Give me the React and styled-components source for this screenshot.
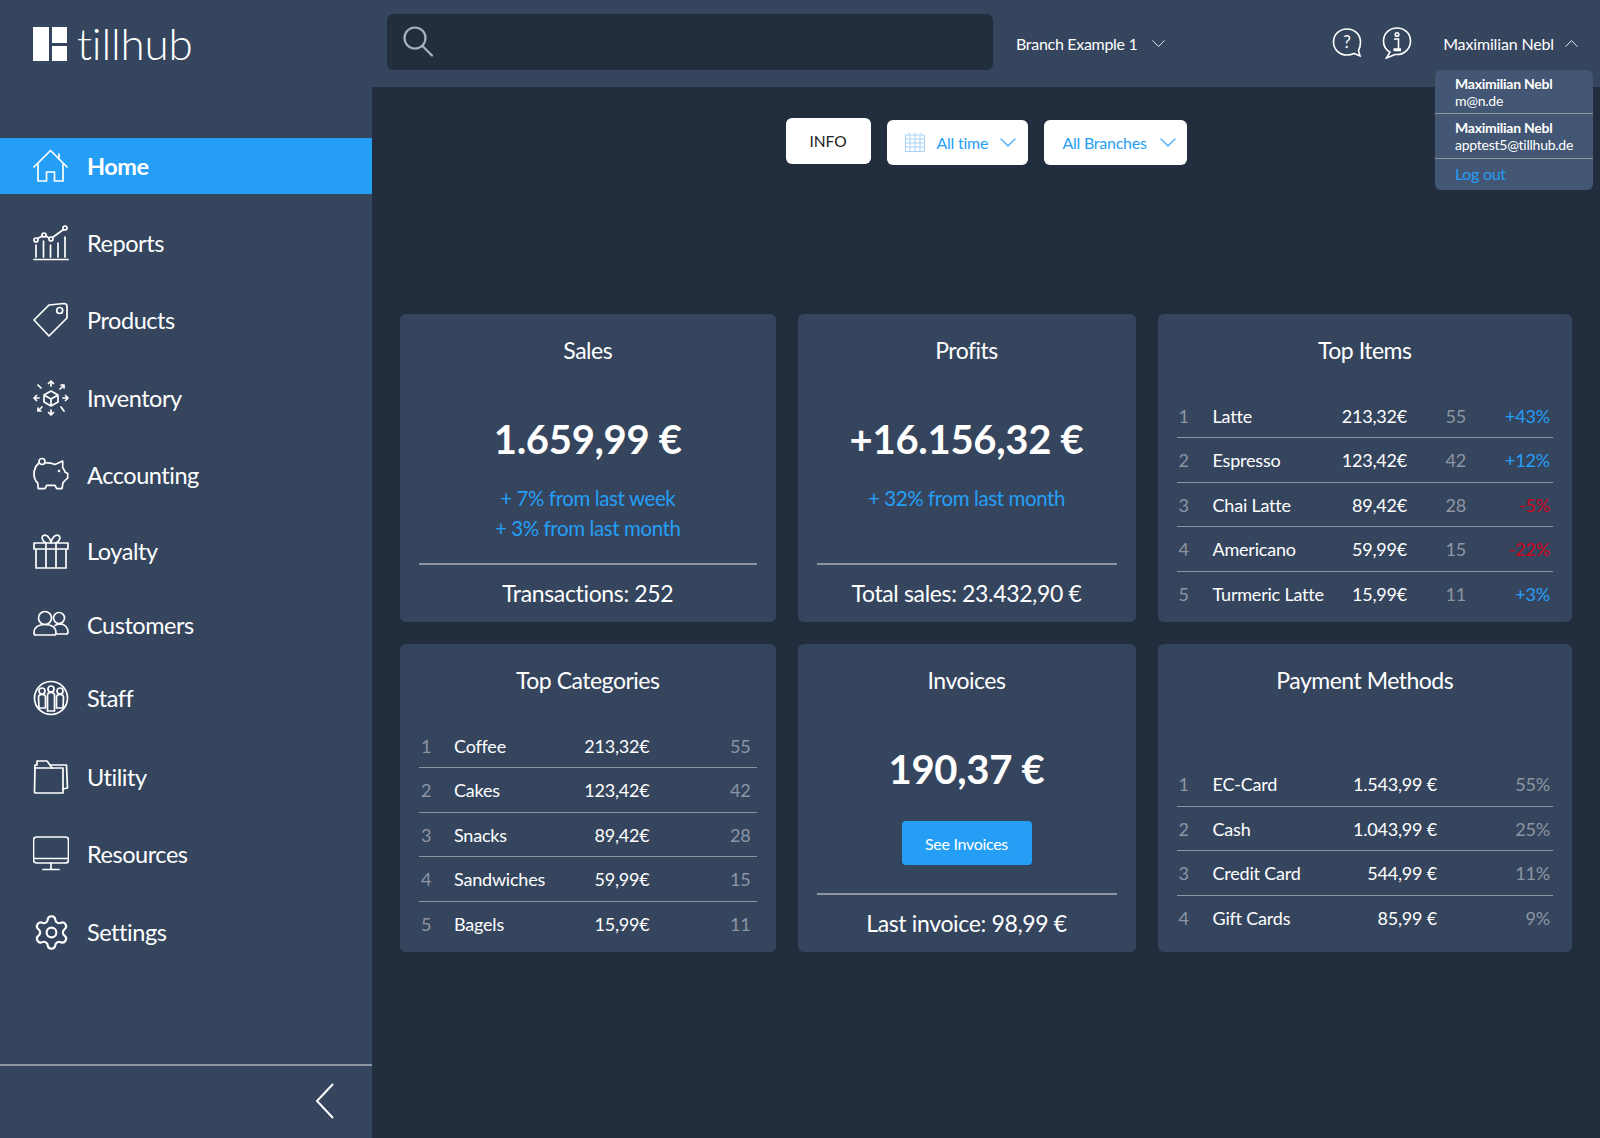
import React from 'react'
import styled, { createGlobalStyle } from 'styled-components'
import { Settings as SettingsCog } from 'lucide-react'

const navy = '#35455e'
const dark = '#222e3e'
const blue = '#259ff6'
const rule = '#8d95a2'

const Global = createGlobalStyle`
  html, body { margin: 0; padding: 0; background: ${dark}; }
  body { font-family: Lato, "Open Sans", sans-serif; color: #fff; }
  * { box-sizing: border-box; }
`

const Page = styled.div`
  width: 1600px;
  height: 1138px;
  display: flex;
  flex-direction: column;
  overflow: hidden;
  background: ${dark};
`

const Header = styled.header`
  height: 87px;
  flex: none;
  display: flex;
  align-items: flex-start;
  background: ${navy};
`

const LogoArea = styled.div`
  width: 387px;
  flex: none;
  display: flex;
  align-items: flex-start;
  padding: 27px 0 0 33px;
`

const LogoMark = styled.div`
  width: 34px;
  height: 34px;
  display: grid;
  grid-template-columns: 16px 15px;
  grid-template-rows: 15.5px 15.5px;
  gap: 3px;
  & > span { background: #fff; }
  & > span:first-child { grid-row: 1 / 3; }
`

const LogoText = styled.span`
  margin: -10px 0 0 10px;
  font-size: 44px;
  line-height: 52px;
  font-weight: 300;
  letter-spacing: -0.2px;
`

const SearchBox = styled.div`
  width: 606px;
  height: 56px;
  margin-top: 14px;
  display: flex;
  align-items: center;
  padding-left: 15px;
  border-radius: 6px;
  background: ${dark};
`

const BranchPicker = styled.div`
  margin: 34px 0 0 23px;
  display: flex;
  align-items: center;
  gap: 14px;
  font-size: 16px;
  line-height: 20px;
  letter-spacing: -0.3px;
`

const HeaderRight = styled.div`
  margin: 27px 0 0 auto;
  padding-right: 22px;
  display: flex;
  align-items: flex-start;
`

const Bubble = styled.svg`
  width: 30px;
  height: 32px;
  margin-right: ${p => p.$gap}px;
  fill: none;
  stroke: #fff;
  stroke-width: 1.6;
`

const UserName = styled.div`
  margin-top: 7px;
  display: flex;
  align-items: center;
  gap: 11px;
  font-size: 16px;
  line-height: 20px;
  letter-spacing: -0.15px;
`

const AccountMenu = styled.div`
  position: absolute;
  left: 1435px;
  top: 70px;
  width: 158px;
  height: 120px;
  border-radius: 6px;
  background: #435673;
  font-size: 14px;
  line-height: 17px;
  letter-spacing: -0.25px;
`

const AccountRow = styled.div`
  height: ${p => p.$h}px;
  padding: ${p => p.$top}px 0 0 20px;
  border-bottom: 1px solid ${rule};
  & > strong { display: block; font-weight: 700; }
`

const LogOut = styled.div`
  padding: 5px 0 0 20px;
  font-size: 16px;
  line-height: 20px;
  letter-spacing: -0.3px;
  color: ${blue};
`

const Body = styled.div`
  flex: 1;
  display: flex;
  min-height: 0;
`

const Sidebar = styled.aside`
  width: 372px;
  flex: none;
  display: flex;
  flex-direction: column;
  background: ${navy};
`

const Nav = styled.nav`
  flex: 1;
  padding-top: 51px;
`

const NavItem = styled.div`
  height: 56px;
  margin-top: ${p => p.$gap}px;
  display: flex;
  align-items: center;
  padding-left: 33px;
  font-size: 23.5px;
  line-height: 30px;
  letter-spacing: -0.45px;
  font-weight: ${p => (p.$active ? 700 : 400)};
  background: ${p => (p.$active ? blue : 'transparent')};
`

const NavIcon = styled.svg`
  width: 36px;
  height: 36px;
  flex: none;
  margin-right: 18px;
  fill: none;
  stroke: #fff;
  stroke-width: 1.7;
  stroke-linejoin: round;
  stroke-linecap: round;
`

const NavCog = styled(SettingsCog)`
  width: 39px;
  height: 39px;
  flex: none;
  margin: 0 16px 0 -1px;
`

const SideFooter = styled.div`
  height: 74px;
  display: flex;
  align-items: center;
  justify-content: flex-end;
  padding: 0 37px 2px 0;
  border-top: 2px solid ${rule};
`

const Main = styled.main`
  flex: 1;
  min-width: 0;
  padding: 31px 28px 0;
`

const Filters = styled.div`
  height: 48px;
  display: flex;
  justify-content: center;
  gap: 16px;
`

const FilterButton = styled.div`
  width: ${p => p.$w}px;
  height: ${p => (p.$center ? 46 : 45.5)}px;
  margin-top: ${p => (p.$center ? 0 : 1.5)}px;
  display: flex;
  align-items: center;
  justify-content: ${p => (p.$center ? 'center' : 'flex-start')};
  padding-left: ${p => (p.$center ? 0 : p.$pad)}px;
  border-radius: 6px;
  background: #fff;
  font-size: ${p => (p.$center ? 15.5 : 16)}px;
  letter-spacing: ${p => (p.$center ? 0 : -0.25)}px;
  color: ${p => (p.$center ? '#222' : blue)};
`

const CalendarLabel = styled.span`
  margin-left: 12px;
`

const Chevron = styled.svg`
  width: ${p => p.$w || 13}px;
  height: ${p => (p.$w || 13) * 0.55}px;
  flex: none;
  margin-left: ${p => p.$left || 0}px;
  fill: none;
  stroke: ${p => p.$color || '#fff'};
  stroke-width: 1;
  overflow: visible;
`

const CardGrid = styled.section`
  margin-top: 148px;
  display: grid;
  grid-template-columns: 375.5px 338px 414.5px;
  grid-template-rows: 308px 308px;
  gap: 22px;
`

const Card = styled.article`
  display: flex;
  flex-direction: column;
  padding: 0 19px;
  border-radius: 6px;
  background: ${navy};
`

const CardTitle = styled.h2`
  margin: 22px 0 0;
  text-align: center;
  font-size: 23px;
  line-height: 29px;
  font-weight: 400;
  letter-spacing: -0.5px;
`

const BigValue = styled.div`
  margin-top: 44px;
  text-align: center;
  font-size: 40px;
  line-height: 60px;
  font-weight: 700;
  letter-spacing: -0.3px;
`

const Trend = styled.div`
  margin-top: 14px;
  text-align: center;
  font-size: 20.5px;
  line-height: 30px;
  letter-spacing: -0.4px;
  color: ${blue};
`

const CardFooter = styled.div`
  height: 59px;
  margin-top: auto;
  padding-top: 14px;
  border-top: 2px solid ${rule};
  text-align: center;
  font-size: 23px;
  line-height: 29px;
  letter-spacing: -0.35px;
`

const InvoiceButton = styled.div`
  width: 130px;
  height: 44px;
  margin: 22px auto 0;
  display: flex;
  align-items: center;
  justify-content: center;
  border-radius: 4px;
  background: ${blue};
  font-size: 16px;
  letter-spacing: -0.3px;
`

const Table = styled.div`
  margin-top: auto;
  padding-bottom: ${p => p.$bottom || 6}px;
`

const Row = styled.div`
  height: 44.4px;
  display: grid;
  grid-template-columns: ${p => p.$cols};
  align-items: center;
  padding-right: ${p => p.$end || 3}px;
  font-size: 18px;
  letter-spacing: -0.2px;
  white-space: nowrap;
  border-bottom: ${p => (p.$last ? 'none' : `1.5px solid ${rule}`)};
`

const Num = styled.span`
  padding-left: 2px;
  color: ${rule};
`

const Amount = styled.span`
  text-align: right;
`

const Muted = styled.span`
  text-align: right;
  color: ${rule};
`

const Change = styled.span`
  text-align: right;
  color: ${p => (p.$down ? '#d0021b' : blue)};
`

const Icon = {
  home: (
    <>
      <path d="M1 19 17.5 2.5 34 19" />
      <path d="M26 6V11" />
      <path d="M5 16V33H13.5V24H21.5V33H30V16" />
    </>
  ),
  reports: (
    <>
      <path d="M1 34.5H35" />
      <path d="M3 32V20M10.5 32V16M17.5 32V20M25 32V18M32 32V12" />
      <circle cx="3" cy="15" r="2" />
      <circle cx="11" cy="10" r="2" />
      <circle cx="18" cy="14" r="2" />
      <circle cx="32" cy="3" r="2" />
      <path d="M4.5 13.5 9.5 11M13 11 16 13M19.5 12.5 30.5 4.5" />
    </>
  ),
  tag: (
    <>
      <path d="M1 18 16 3 31 1.500C33 1.500 34 2.500 34 4.500V16L16 34Z" />
      <circle cx="26.700" cy="8.500" r="3" />
    </>
  ),
  inventory: (
    <>
      <path d="M18 11 25 15V22L18 26 11 22V15ZM11 15 18 19 25 15M18 19V26" />
      <path d="M18 6V1M15.5 3.5 18 1 20.5 3.5M18 30V35M15.5 32.5 18 35 20.5 32.5M6 18H1M3.5 15.5 1 18 3.5 20.5M30 18H35M32.5 15.5 35 18 32.5 20.5" />
      <path d="M8 8 5 5M27 9 31 5M28 5H31V8M9 27 5 31M5 28V31H8M28 27 31 31" />
    </>
  ),
  piggy: (
    <>
      <circle cx="9" cy="4.5" r="3" />
      <path d="M6 6C2.500 9 1 13 1 17 1 21 2.500 24 4.700 26L5.300 31.600H12L13.700 28.300H22L23.700 31.600H29L30 25.600C32 24 33 22 34.700 21V16.500L32 15C31.500 13 30.500 12 29.700 10.600V4L22 7.500C19 6 16 5.500 13 6" />
      <circle cx="26" cy="14" r=".5" />
    </>
  ),
  gift: (
    <>
      <path d="M1 10H35V16H1ZM3 16V35H33V16ZM13 10V35M23 10V35" />
      <path d="M13 10C9 8 8 4 10.500 2.500 13 1 17 4 18 10 19 4 23 1 25.500 2.500 28 4 27 8 23 10" />
    </>
  ),
  customers: (
    <>
      <circle cx="12" cy="11" r="6.500" />
      <circle cx="26" cy="11" r="5.500" />
      <path d="M1 26C1 20 6 17.500 12 17.500 18 17.500 23 20 23 26 23 27.500 22 28 21 28H3C2 28 1 27.500 1 26Z" />
      <path d="M22 18.500C24 17 27 17 29 17 32 18 35 21 35 25 35 26.500 34 27 33 27H24" />
    </>
  ),
  staff: (
    <>
      <circle cx="18" cy="18" r="16.500" />
      <circle cx="9" cy="11" r="3" />
      <circle cx="18" cy="9" r="3" />
      <circle cx="27" cy="11" r="3" />
      <path d="M5.500 17C5.500 15 7 14.500 9 14.500 11 14.500 12.500 15 12.500 17V28H6Z" />
      <path d="M14.500 15C14.500 13 16 12.500 18 12.500 20 12.500 21.500 13 21.500 15V31H14.500Z" />
      <path d="M23.500 17C23.500 15 25 14.500 27 14.500 29 14.500 30.500 15 30.500 17L30 28H23.500Z" />
    </>
  ),
  folder: (
    <>
      <path d="M2 9H30V34H3C2 34 1.500 33.500 1.500 33Z" />
      <path d="M2 9V6H4V2H14L17 6H33.500L34.500 29 30 30" />
      <path d="M17 6 19 9" />
    </>
  ),
  monitor: (
    <>
      <rect x="0.500" y="1" width="35" height="26" rx="3" />
      <path d="M1 22.500H35M18 27V33M10 33.500H26" />
    </>
  ),
}

const navItems = [
  { label: 'Home', icon: 'home', gap: 0, active: true },
  { label: 'Reports', icon: 'reports', gap: 21 },
  { label: 'Products', icon: 'tag', gap: 21 },
  { label: 'Inventory', icon: 'inventory', gap: 22 },
  { label: 'Accounting', icon: 'piggy', gap: 21 },
  { label: 'Loyalty', icon: 'gift', gap: 20 },
  { label: 'Customers', icon: 'customers', gap: 18 },
  { label: 'Staff', icon: 'staff', gap: 17 },
  { label: 'Utility', icon: 'folder', gap: 23 },
  { label: 'Resources', icon: 'monitor', gap: 21 },
  { label: 'Settings', gap: 22 },
]

const topItems = [
  ['Latte', '213,32€', '55', '+43%'],
  ['Espresso', '123,42€', '42', '+12%'],
  ['Chai Latte', '89,42€', '28', '-5%'],
  ['Americano', '59,99€', '15', '-22%'],
  ['Turmeric Latte', '15,99€', '11', '+3%'],
]

const topCategories = [
  ['Coffee', '213,32€', '55'],
  ['Cakes', '123,42€', '42'],
  ['Snacks', '89,42€', '28'],
  ['Sandwiches', '59,99€', '15'],
  ['Bagels', '15,99€', '11'],
]

const payments = [
  ['EC-Card', '1.543,99 €', '55%'],
  ['Cash', '1.043,99 €', '25%'],
  ['Credit Card', '544,99 €', '11%'],
  ['Gift Cards', '85,99 €', '9%'],
]

const Down = ({ w, left, color }) => (
  <Chevron $w={w} $left={left} $color={color} viewBox="0 0 15 8.250"><path d="M.5.5 7.500 7.500 14.500.5" /></Chevron>
)

const App = () => (
  <Page>
    <Global />
    <Header>
      <LogoArea>
        <LogoMark><span /><span /><span /></LogoMark>
        <LogoText>tillhub</LogoText>
      </LogoArea>
      <SearchBox>
        <svg width="32" height="32" viewBox="0 0 32 32" fill="none" stroke="#a9b1bd" strokeWidth="2.2">
          <circle cx="13" cy="12" r="10.500" />
          <path d="M20.500 20 30 29.500" strokeLinecap="round" />
        </svg>
      </SearchBox>
      <BranchPicker>Branch Example 1 <Down /></BranchPicker>
      <HeaderRight>
        <Bubble $gap={20} viewBox="0 0 30 32">
          <path d="M15 2C7.500 2 1.500 7.500 1.500 15S7.500 28 15 28C18 28 20 27.500 22 26.500L28 29 26.500 23.500C28 21 28.500 18 28.500 15 28.500 7.500 22.500 2 15 2Z" />
          <text x="15" y="21" textAnchor="middle" fontFamily="Lato" fontSize="17" fill="#fff" stroke="none">?</text>
        </Bubble>
        <Bubble $gap={31} viewBox="0 0 30 32">
          <path d="M15 1C7.500 1 1.500 6.500 1.500 14 1.500 19 4 23 8 25L4.500 31 13 27.500C14 27.500 14.500 27.500 15 27.500 22.500 27.500 28.500 21.500 28.500 14S22.500 1 15 1Z" />
          <circle cx="15" cy="7.500" r="1.800" />
          <path d="M12 12H16.500V21.500M11.500 22H19M11.500 23.500H19" />
        </Bubble>
        <UserName>
          Maximilian Nebl
          <Chevron viewBox="0 0 15 8.250"><path d="M.5 7.750 7.500.75 14.500 7.750" /></Chevron>
        </UserName>
      </HeaderRight>
    </Header>
    <AccountMenu>
      <AccountRow $h={44} $top={5}><strong>Maximilian Nebl</strong>m@n.de</AccountRow>
      <AccountRow $h={45} $top={5}><strong>Maximilian Nebl</strong>apptest5@tillhub.de</AccountRow>
      <LogOut>Log out</LogOut>
    </AccountMenu>
    <Body>
      <Sidebar>
        <Nav>
          {navItems.map(item => (
            <NavItem key={item.label} $gap={item.gap} $active={item.active}>
              {item.icon
                ? <NavIcon viewBox="0 0 36 36">{Icon[item.icon]}</NavIcon>
                : <NavCog color="#fff" strokeWidth={1.3} />}
              {item.label}
            </NavItem>
          ))}
        </Nav>
        <SideFooter>
          <svg width="20" height="36" viewBox="0 0 20 36" fill="none" stroke="#fff" strokeWidth="2"><path d="M18 1 2 18 18 35" /></svg>
        </SideFooter>
      </Sidebar>
      <Main>
        <Filters>
          <FilterButton $center $w={85}>INFO</FilterButton>
          <FilterButton $w={141} $pad={18}>
            <svg width="20" height="20" viewBox="0 0 20 20" fill="none" stroke="#a6d3f7" strokeWidth="1">
              <path d="M.5 3H19.500V19.500H.5ZM.5 7H19.500M.5 11H19.500M.5 15H19.500M5 3V19.500M10 3V19.500M15 3V19.500M4 .5V3M10 .5V3M16 .5V3" />
            </svg>
            <CalendarLabel>All time</CalendarLabel>
            <Down w={16} left={12} color={blue} />
          </FilterButton>
          <FilterButton $w={143} $pad={19}>
            All Branches
            <Down w={16} left={13} color={blue} />
          </FilterButton>
        </Filters>
        <CardGrid>
          <Card>
            <CardTitle>Sales</CardTitle>
            <BigValue>1.659,99 €</BigValue>
            <Trend>+ 7% from last week<br />+ 3% from last month</Trend>
            <CardFooter>Transactions: 252</CardFooter>
          </Card>
          <Card>
            <CardTitle>Profits</CardTitle>
            <BigValue>+16.156,32 €</BigValue>
            <Trend>+ 32% from last month</Trend>
            <CardFooter>Total sales: 23.432,90 €</CardFooter>
          </Card>
          <Card>
            <CardTitle>Top Items</CardTitle>
            <Table>
              {topItems.map((r, i) => (
                <Row key={r[0]} $last={i === 4} $cols="36px minmax(0, 1fr) 90px 59px 84px">
                  <Num>{i + 1}</Num>
                  <span>{r[0]}</span>
                  <Amount>{r[1]}</Amount>
                  <Muted>{r[2]}</Muted>
                  <Change $down={r[3][0] === '-'}>{r[3]}</Change>
                </Row>
              ))}
            </Table>
          </Card>
          <Card>
            <CardTitle>Top Categories</CardTitle>
            <Table>
              {topCategories.map((r, i) => (
                <Row key={r[0]} $last={i === 4} $end={6} $cols="35px minmax(0, 1fr) 90px 101px">
                  <Num>{i + 1}</Num>
                  <span>{r[0]}</span>
                  <Amount>{r[1]}</Amount>
                  <Muted>{r[2]}</Muted>
                </Row>
              ))}
            </Table>
          </Card>
          <Card>
            <CardTitle>Invoices</CardTitle>
            <BigValue>190,37 €</BigValue>
            <InvoiceButton>See Invoices</InvoiceButton>
            <CardFooter>Last invoice: 98,99 €</CardFooter>
          </Card>
          <Card>
            <CardTitle>Payment Methods</CardTitle>
            <Table $bottom={12}>
              {payments.map((r, i) => (
                <Row key={r[0]} $last={i === 3} $cols="36px minmax(0, 1fr) 110px 113px">
                  <Num>{i + 1}</Num>
                  <span>{r[0]}</span>
                  <Amount>{r[1]}</Amount>
                  <Muted>{r[2]}</Muted>
                </Row>
              ))}
            </Table>
          </Card>
        </CardGrid>
      </Main>
    </Body>
  </Page>
)

export default App
